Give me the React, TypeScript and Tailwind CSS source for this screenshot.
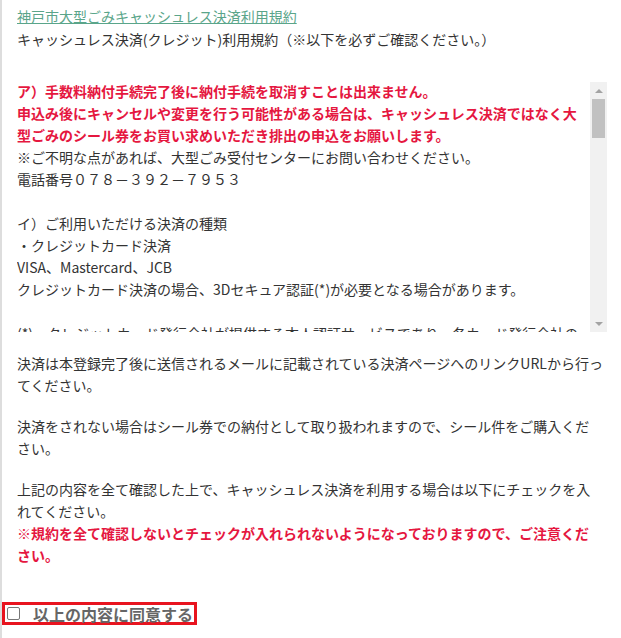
import React from "react";

const red = "text-[#e5173f] font-bold";

function FakeScrollbar() {
  return (
    <div className="flex w-[17px] shrink-0 flex-col bg-[#f1f1f1]">
      <div className="flex h-[17px] items-center justify-center">
        <div className="h-0 w-0 border-x-[4px] border-b-[4px] border-x-transparent border-b-[#a3a3a3]" />
      </div>
      <div className="mx-[2px] h-[39px] bg-[#c1c1c1]" />
      <div className="flex-1" />
      <div className="flex h-[17px] items-center justify-center">
        <div className="h-0 w-0 border-x-[4px] border-t-[4px] border-x-transparent border-t-[#a3a3a3]" />
      </div>
    </div>
  );
}

export default function App() {
  return (
    <div className="min-h-screen border-l-2 border-[#dddddd] bg-white text-[14px] text-[#333] font-['Noto_Sans_CJK_JP','Noto_Sans',sans-serif]">
      <div className="pl-[15px] pr-[14px] pt-[5px]">
        <a href="#" className="leading-[23px] text-[#5aa58a] underline">
          神戸市大型ごみキャッシュレス決済利用規約
        </a>
        <p className="leading-[23px]">
          キャッシュレス決済(クレジット)利用規約（※以下を必ずご確認ください。）
        </p>

        {/* terms box */}
        <div className="mt-[31px] flex h-[250px]">
          <div className="flex-1 overflow-hidden leading-[22px]">
            <div className="-mt-[2px]">
              <p className={red}>ア）手数料納付手続完了後に納付手続を取消すことは出来ません。</p>
              <p className={red}>
                申込み後にキャンセルや変更を行う可能性がある場合は、キャッシュレス決済ではなく大型ごみのシール券をお買い求めいただき排出の申込をお願いします。
              </p>
              <p>※ご不明な点があれば、大型ごみ受付センターにお問い合わせください。</p>
              <p>電話番号０７８－３９２－７９５３</p>
              <p>&nbsp;</p>
              <p>イ）ご利用いただける決済の種類</p>
              <p>・クレジットカード決済</p>
              <p>VISA、Mastercard、JCB</p>
              <p>クレジットカード決済の場合、3Dセキュア認証(*)が必要となる場合があります。</p>
              <p>&nbsp;</p>
              <p className="whitespace-nowrap">
                (*)　クレジットカード発行会社が提供する本人認証サービスであり、各カード発行会社の
              </p>
            </div>
          </div>
          <FakeScrollbar />
        </div>

        <div className="mt-[20px] pr-[4px] leading-[22px]">
          <p className="mb-[19px]">
            決済は本登録完了後に送信されるメールに記載されている決済ページへのリンクURLから行ってください。
          </p>
          <p className="mb-[19px]">
            決済をされない場合はシール券での納付として取り扱われますので、シール件をご購入ください。
          </p>
          <p>
            上記の内容を全て確認した上で、キャッシュレス決済を利用する場合は以下にチェックを入れてください。
            <br />
            <span className={red}>
              ※規約を全て確認しないとチェックが入れられないようになっておりますので、ご注意ください。
            </span>
          </p>
        </div>
      </div>

      <label className="mt-[36px] inline-flex h-[23px] items-center whitespace-nowrap border-[3px] border-[#e8141f] pr-[1px] text-[16px] font-bold text-[#666]">
        <input
          type="checkbox"
          className="ml-[2px] h-[13px] w-[13px] appearance-none rounded-[2px] border border-[#777] bg-white"
        />
        <span className="ml-[13px] leading-none">以上の内容に同意する</span>
      </label>
    </div>
  );
}
